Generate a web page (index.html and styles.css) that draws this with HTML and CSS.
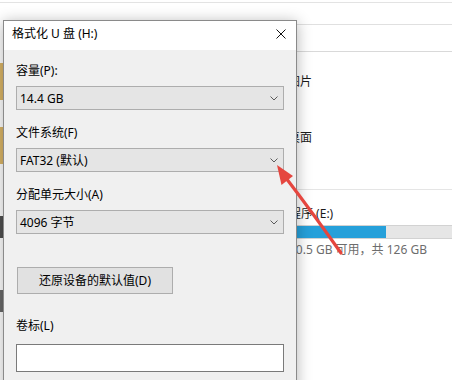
FILE: index.html
```html
<!DOCTYPE html>
<html>
<head lang="zh-CN">
    <meta charset="UTF-8">
    <title>格式化 U 盘 (H:)</title>
    <link rel="stylesheet" href="styles.css">
</head>
<body>
    <div id="screen">
        <div id="explorer">
            <div class="topline"></div>
            <div class="main">
                <div class="edge">
                    <span class="edge-folder"></span>
                    <span class="edge-folder low"></span>
                    <span class="edge-dark"></span>
                    <span class="edge-dark low"></span>
                </div>
                <div class="pane">
                    <div class="toolbar"></div>
                    <div class="crumb"></div>
                    <ul class="folders">
                        <li>图片</li>
                        <li>桌面</li>
                    </ul>
                    <div class="drive">
                        <p class="drive-name">程序 (E:)</p>
                        <div class="bar"><div class="bar-used" style="width:96px"></div></div>
                        <p class="drive-free">10.5 GB 可用，共 126 GB</p>
                    </div>
                </div>
            </div>
        </div>

        <div id="dialog">
            <div class="titlebar">
                <span class="title">格式化 U 盘 (H:)</span>
                <svg class="close" width="10" height="10" viewBox="0 0 10 10">
                    <path d="M0.5 0.5 L9.5 9.5 M9.5 0.5 L0.5 9.5" stroke="#111" stroke-width="1" fill="none"/>
                </svg>
            </div>
            <div class="form">
                <div class="label">容量(P):</div>
                <div class="select">
                    <span>14.4 GB</span>
                    <svg class="chev" width="8" height="5" viewBox="0 0 8 5"><path d="M0.5 0.5 L4 4 L7.5 0.5" stroke="#5a5a5a" fill="none"/></svg>
                </div>
                <div class="label gap">文件系统(F)</div>
                <div class="select">
                    <span>FAT32 (默认)</span>
                    <svg class="chev" width="8" height="5" viewBox="0 0 8 5"><path d="M0.5 0.5 L4 4 L7.5 0.5" stroke="#5a5a5a" fill="none"/></svg>
                </div>
                <div class="label gap">分配单元大小(A)</div>
                <div class="select">
                    <span>4096 字节</span>
                    <svg class="chev" width="8" height="5" viewBox="0 0 8 5"><path d="M0.5 0.5 L4 4 L7.5 0.5" stroke="#5a5a5a" fill="none"/></svg>
                </div>
                <div class="btn">还原设备的默认值(D)</div>
                <div class="label vol">卷标(L)</div>
                <div class="input"></div>
            </div>
        </div>

        <svg id="arrow" width="452" height="380" viewBox="0 0 452 380">
            <path d="M341 253 Q312 212 286 178" stroke="#e5463f" stroke-width="3.2" fill="none" stroke-linecap="round"/>
            <polygon points="277,165 293,176 281.5,185" fill="#e5463f"/>
        </svg>
    </div>
</body>
</html>
```

FILE: styles.css
```css
*{
    margin: 0;
    padding: 0;
    box-sizing: border-box;
}
ul{
    list-style: none;
}
body{
    font-family: "Noto Sans", "Noto Sans CJK SC", sans-serif;
    font-size: 12px;
    color: #000;
    background: #fff;
}
#screen{
    width: 452px;
    height: 380px;
    position: relative;
    overflow: hidden;
    background: #fff;
}
#explorer{
    padding-top: 2px;
}
.topline{
    height: 1px;
    background: #e3e3e3;
}
.main{
    display: flex;
}
.edge{
    width: 3px;
    display: flex;
    flex-direction: column;
}
.edge span{
    display: block;
    width: 3px;
}
.edge-folder{
    height: 37px;
    margin-top: 60px;
    background: #dcb667;
}
.edge-folder.low{
    margin-top: 27px;
}
.edge-dark{
    height: 22px;
    margin-top: 52px;
    background: #505050;
}
.edge-dark.low{
    margin-top: 52px;
    background: #6a6a6a;
}
.pane{
    flex: 1;
}
.toolbar{
    height: 22px;
    border-bottom: 1px solid #e0e0e0;
}
.crumb{
    height: 27px;
    border-bottom: 1px solid #d9d9d9;
}
.folders{
    padding: 22px 0 0 285px;
    border-bottom: 1px solid #e5e5e5;
}
.folders li{
    line-height: 16px;
    height: 16px;
    margin-bottom: 40px;
    color: #1a1a1a;
}
.folders li:last-child{
    margin-bottom: 43px;
}
.drive{
    padding: 16px 0 0 286px;
}
.drive-name{
    line-height: 16px;
    height: 16px;
    color: #1a1a1a;
}
.bar{
    margin-top: 3px;
    height: 14px;
    background: #e6e6e6;
    border: 1px solid #d2d2d2;
    border-right: none;
}
.bar-used{
    height: 12px;
    background: #26a0da;
}
.drive-free{
    margin-top: 3px;
    line-height: 16px;
    height: 16px;
    color: #6d6d6d;
}

#dialog{
    position: absolute;
    left: 3px;
    top: 20px;
    width: 294px;
    height: 380px;
    border: 1px solid #8a8a8a;
    background: #f0f0f0;
    box-shadow: 0 2px 14px rgba(0,0,0,0.3);
}
.titlebar{
    height: 29px;
    background: #fff;
    display: flex;
    justify-content: space-between;
    align-items: flex-start;
    padding: 5px 10px 0 8px;
}
.title{
    line-height: 16px;
}
.close{
    margin-top: 3px;
}
.form{
    padding: 13px 12px 0;
}
.label{
    line-height: 16px;
    height: 16px;
}
.label.gap{
    margin-top: 15px;
}
.select{
    margin-top: 7px;
    height: 24px;
    border: 1px solid #adadad;
    background: #e5e5e5;
    display: flex;
    align-items: center;
    justify-content: space-between;
    padding: 0 5px 0 3px;
}
.btn{
    margin: 33px 0 0 1px;
    width: 156px;
    height: 27px;
    border: 1px solid #adadad;
    background: #e1e1e1;
    text-align: center;
    line-height: 25px;
}
.label.vol{
    margin-top: 24px;
}
.input{
    margin-top: 10px;
    height: 28px;
    border: 1px solid #7a7a7a;
    background: #fff;
}
#arrow{
    position: absolute;
    left: 0;
    top: 0;
    pointer-events: none;
}
```
